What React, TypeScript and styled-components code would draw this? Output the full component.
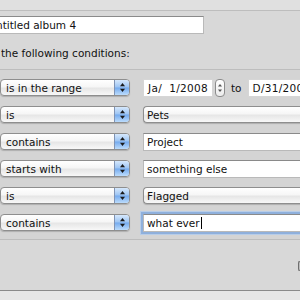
import React from "react";
import styled, { createGlobalStyle } from "styled-components";

const Global = createGlobalStyle`
  html, body { margin: 0; padding: 0; background: #e6e6e6; }
  body {
    font-family: "DejaVu Sans", "Liberation Sans", sans-serif;
    font-size: 10.5px;
    color: #111;
  }
`;

const Window = styled.div`
  width: 300px;
  height: 300px;
  overflow: hidden;
  display: flex;
  flex-direction: column;
  background: #e6e6e6;
`;

const Sheet = styled.div`
  height: 291px;
  display: flex;
  flex-direction: column;
  background: #d8d8d8;
  border-bottom: 1px solid #8a8a8a;
  box-sizing: border-box;
`;

const TopStrip = styled.div`
  height: 10px;
  background: #e0e0e0;
  border-bottom: 1px solid #bdbdbd;
`;

const NameRow = styled.div`
  padding-top: 5px;
  display: flex;
`;

const TextField = styled.div<{ $w?: number; $focus?: boolean }>`
  box-sizing: border-box;
  height: 18px;
  width: ${(p) => (p.$w ? `${p.$w}px` : "220px")};
  flex-shrink: 0;
  background: #fff;
  border: 1px solid #b9b9b9;
  border-top-color: #8a8a8a;
  display: flex;
  align-items: center;
  padding-left: 3px;
  white-space: nowrap;
  box-shadow: ${(p) =>
    p.$focus ? "0 0 0 2px #8fb0dc, 0 0 0 3px #b8cde8" : "none"};
`;

const NameField = styled(TextField)`
  margin-left: -6px;
  padding-left: 1px;
`;

const MatchLabel = styled.div`
  margin-top: 12px;
  padding-left: 1px;
  height: 14px;
  line-height: 14px;
  white-space: nowrap;
`;

const Conditions = styled.div`
  margin-top: 9px;
  border-top: 1px solid #bdbdbd;
  border-bottom: 1px solid #bdbdbd;
  background: #d4d4d4;
  height: 171px;
  box-sizing: border-box;
  padding-top: 9px;
  display: flex;
  flex-direction: column;
  gap: 10px;
`;

const Row = styled.div`
  display: flex;
  align-items: center;
  gap: 13px;
  height: 17px;
`;

const Popup = styled.div<{ $w?: number }>`
  box-sizing: border-box;
  height: 17px;
  width: ${(p) => (p.$w ? `${p.$w}px` : "130px")};
  flex-shrink: 0;
  display: flex;
  align-items: center;
  border: 1px solid #8e8e8e;
  border-radius: 4px;
  background: linear-gradient(#ffffff, #f6f6f6 45%, #e6e6e6 55%, #f8f8f8);
  box-shadow: 0 1px 1px rgba(0, 0, 0, 0.18);
  overflow: hidden;
  white-space: nowrap;
`;

const PopupLabel = styled.span`
  flex: 1;
  padding-left: 5px;
`;

const PopupArrows = styled.span`
  width: 14px;
  align-self: stretch;
  border-left: 1px solid #7f93b4;
  background: linear-gradient(#d6e8fc, #9cc4f3 48%, #74aaee 52%, #bcdcfc);
  display: flex;
  align-items: center;
  justify-content: center;
`;

const ValuePopup = styled(Popup)`
  width: 200px;
  border-right: none;
  border-top-right-radius: 0;
  border-bottom-right-radius: 0;
  padding-left: 3px;
`;

const DateField = styled.div<{ $w: number }>`
  box-sizing: border-box;
  height: 18px;
  width: ${(p) => p.$w}px;
  flex-shrink: 0;
  background: #fff;
  border: 1px solid #d6d6d6;
  display: flex;
  align-items: center;
  padding-left: 4px;
  white-space: nowrap;
  letter-spacing: 0.3px;
`;

const DateGroup = styled.div`
  display: flex;
  align-items: center;
`;

const Stepper = styled.div`
  box-sizing: border-box;
  margin-left: 2px;
  width: 10px;
  height: 18px;
  border: 1px solid #8c8c8c;
  border-radius: 4px;
  background: linear-gradient(#ffffff, #ececec);
  display: flex;
  align-items: center;
  justify-content: center;
`;

const ToLabel = styled.span`
  margin: 0 6px 0 6px;
`;

const Caret = styled.span`
  display: inline-block;
  width: 1px;
  height: 12px;
  background: #000;
  margin-left: 1px;
`;

const Footer = styled.div`
  flex: 1;
  display: flex;
  justify-content: flex-end;
  padding-top: 21px;
`;

const EdgeButton = styled.div`
  box-sizing: border-box;
  width: 2px;
  height: 10px;
  border: 1px solid #6e6e6e;
  border-right: none;
  border-radius: 2px 0 0 2px;
  background: #bdbdbd;
`;

const Arrows = () => (
  <svg width="7" height="11" viewBox="0 0 7 11">
    <path d="M3.5 1 L6 4.2 L1 4.2 Z" fill="#1a1a1a" />
    <path d="M3.5 10 L6 6.8 L1 6.8 Z" fill="#1a1a1a" />
  </svg>
);

const SmallArrows = () => (
  <svg width="6" height="12" viewBox="0 0 6 12">
    <path d="M3 2 L5 4.5 L1 4.5 Z" fill="#555" />
    <path d="M3 10 L5 7.5 L1 7.5 Z" fill="#555" />
  </svg>
);

const Select = ({ label }: { label: string }) => (
  <Popup>
    <PopupLabel>{label}</PopupLabel>
    <PopupArrows>
      <Arrows />
    </PopupArrows>
  </Popup>
);

export default function App() {
  return (
    <>
      <Global />
      <Window>
        <Sheet>
          <TopStrip />
          <NameRow>
            <NameField $w={210}>ntitled album 4</NameField>
          </NameRow>
          <MatchLabel>the following conditions:</MatchLabel>
          <Conditions>
            <Row>
              <Select label="is in the range" />
              <DateGroup>
                <DateField $w={70}>Ja/&nbsp; 1/2008</DateField>
                <Stepper>
                  <SmallArrows />
                </Stepper>
                <ToLabel>to</ToLabel>
                <DateField $w={70}>D/31/2008</DateField>
              </DateGroup>
            </Row>
            <Row>
              <Select label="is" />
              <ValuePopup>Pets</ValuePopup>
            </Row>
            <Row>
              <Select label="contains" />
              <TextField $w={200}>Project</TextField>
            </Row>
            <Row>
              <Select label="starts with" />
              <TextField $w={200}>something else</TextField>
            </Row>
            <Row>
              <Select label="is" />
              <ValuePopup>Flagged</ValuePopup>
            </Row>
            <Row>
              <Select label="contains" />
              <TextField $w={200} $focus>
                what ever
                <Caret />
              </TextField>
            </Row>
          </Conditions>
          <Footer>
            <EdgeButton />
          </Footer>
        </Sheet>
      </Window>
    </>
  );
}
